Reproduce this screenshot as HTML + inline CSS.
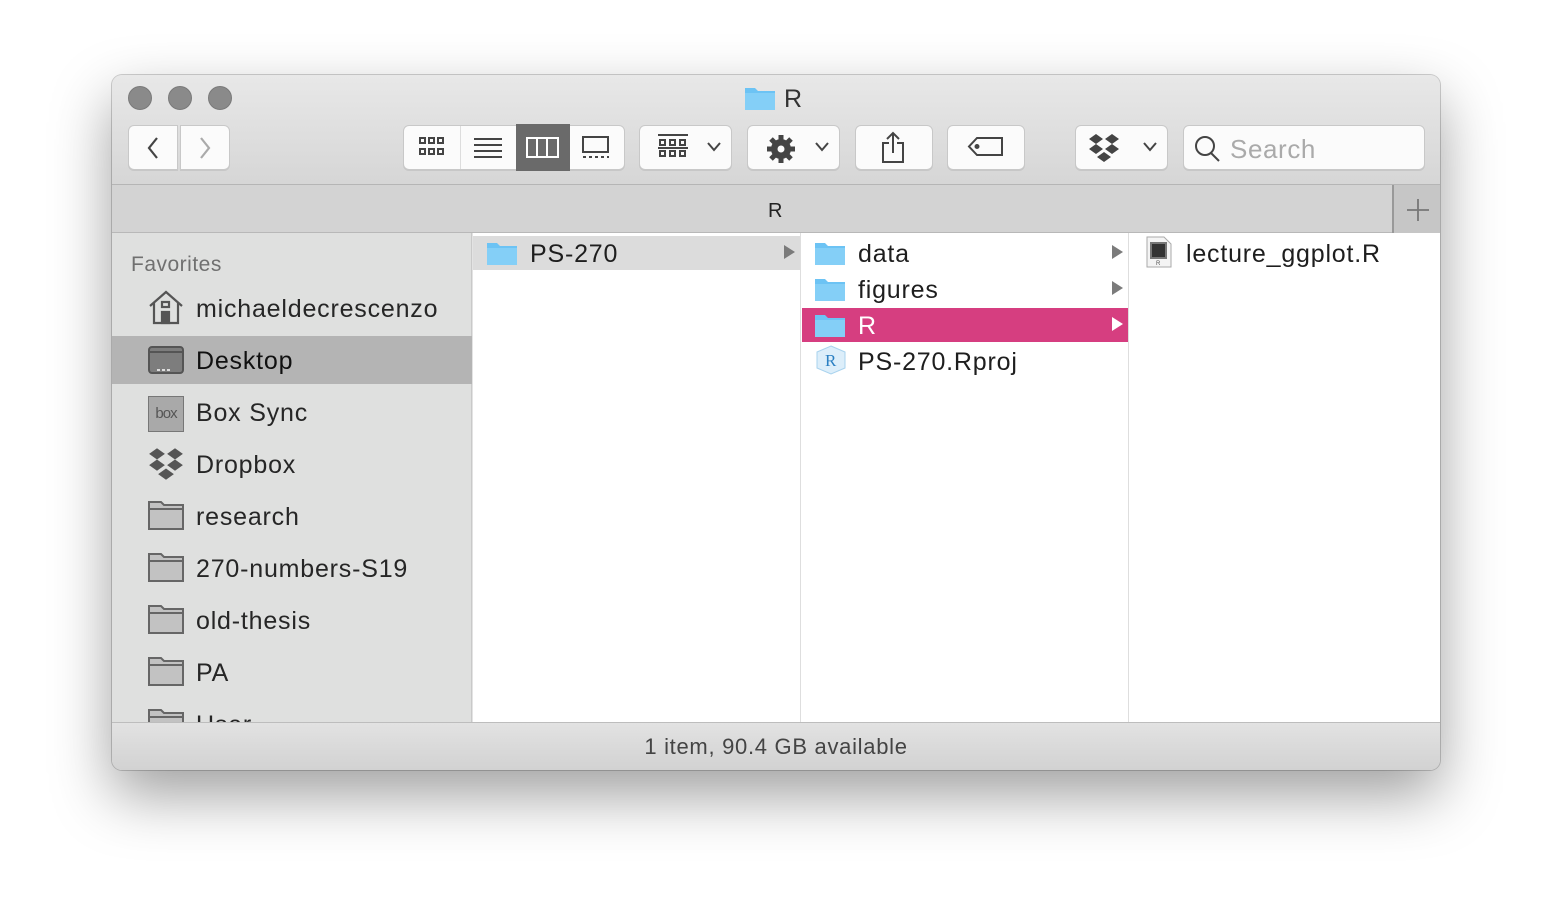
<!DOCTYPE html>
<html><head><meta charset="utf-8"><style>
*{box-sizing:border-box;margin:0;padding:0}
body{width:1552px;height:918px;background:#fff;position:relative;overflow:hidden;font-family:"Liberation Sans",sans-serif}
.a{position:absolute}
.win{left:112px;top:75px;width:1328px;height:695px;border-radius:10px;background:#e3e3e3;box-shadow:0 25px 60px rgba(0,0,0,.38),0 0 0 1px rgba(0,0,0,.18);overflow:hidden}
.light{width:24px;height:24px;border-radius:50%;background:#8a8a8a;border:1px solid #7a7a7a;top:11px}
.btn{background:#fbfbfb;border:1px solid #c8c8c8;border-radius:6px;box-shadow:0 1px 0 rgba(0,0,0,.08);height:45px;top:50px}
.sb{font-size:25px;letter-spacing:0.8px;color:#262626}
.it{font-size:25px;letter-spacing:0.8px;color:#1e1e1e}
.tri{width:0;height:0;border-top:7px solid transparent;border-bottom:7px solid transparent;border-left:11px solid #7b7b7b}
</style></head><body>
<div class="a win">
  <div class="a" style="left:0;top:0;width:1328px;height:110px;background:linear-gradient(#e8e8e8,#d6d6d6);border-bottom:1px solid #b5b5b5"></div>
  <div class="a light" style="left:16px"></div>
  <div class="a light" style="left:56px"></div>
  <div class="a light" style="left:96px"></div>
  <svg class="a" style="left:632px;top:10px" width="32" height="26" viewBox="0 0 32 26"><path d="M1 3h10l3 3h17v19H1z" fill="#6cc3f4"/><path d="M1 8h30v17H1z" fill="#84cff7"/></svg>
  <div class="a" style="left:672px;top:10px;font-size:25px;color:#333">R</div>
  <div class="a btn" style="left:16px;width:50px;border-radius:6px 0 0 6px"></div>
  <div class="a btn" style="left:68px;width:50px;border-radius:0 6px 6px 0"></div>
  <svg class="a" style="left:34px;top:61px" width="14" height="24"><path d="M11 2L3 12l8 10" stroke="#444" stroke-width="2.2" fill="none"/></svg>
  <svg class="a" style="left:86px;top:61px" width="14" height="24"><path d="M3 2l8 10-8 10" stroke="#aaa" stroke-width="2.2" fill="none"/></svg>
  <div class="a btn" style="left:291px;width:222px"></div>
  <div class="a" style="left:348px;top:51px;width:1px;height:43px;background:#ddd"></div>
  <div class="a" style="left:404px;top:49px;width:54px;height:47px;background:#6a6a6a"></div>
  <svg class="a" style="left:306px;top:60px" width="30" height="24" fill="none" stroke="#444" stroke-width="2"><rect x="2" y="3" width="5" height="5"/><rect x="11" y="3" width="5" height="5"/><rect x="20" y="3" width="5" height="5"/><rect x="2" y="14" width="5" height="5"/><rect x="11" y="14" width="5" height="5"/><rect x="20" y="14" width="5" height="5"/></svg>
  <svg class="a" style="left:361px;top:60px" width="30" height="24" stroke="#444" stroke-width="2"><path d="M1 4h28M1 10h28M1 16h28M1 22h28"/></svg>
  <svg class="a" style="left:414px;top:61px" width="34" height="24" fill="none" stroke="#fff" stroke-width="2"><rect x="1" y="2" width="31" height="19"/><path d="M11 2v19M21 2v19"/></svg>
  <svg class="a" style="left:469px;top:60px" width="30" height="26" fill="none" stroke="#444" stroke-width="2"><rect x="2" y="2" width="25" height="15"/><path d="M2 22h3M8 22h3M14 22h3M20 22h3M26 22h2"/></svg>
  <div class="a btn" style="left:527px;width:93px"></div>
  <svg class="a" style="left:545px;top:58px" width="32" height="28" fill="none" stroke="#444" stroke-width="2"><path d="M1 2h30" /><rect x="3" y="7" width="5" height="5"/><rect x="13" y="7" width="5" height="5"/><rect x="23" y="7" width="5" height="5"/><rect x="3" y="18" width="5" height="5"/><rect x="13" y="18" width="5" height="5"/><rect x="23" y="18" width="5" height="5"/><path d="M1 15h30"/></svg>
  <svg class="a" style="left:594px;top:66px" width="16" height="12"><path d="M2 2l6 7 6-7" stroke="#444" stroke-width="2" fill="none"/></svg>
  <div class="a btn" style="left:635px;width:93px"></div>
  <svg class="a" style="left:654px;top:59px" width="30" height="30" viewBox="0 0 30 30"><g fill="#444"><circle cx="15" cy="15" r="10"/><g stroke="#444" stroke-width="5"><path d="M15 1v28M1 15h28M5 5l20 20M25 5L5 25"/></g></g><circle cx="15" cy="15" r="3.5" fill="#fbfbfb"/></svg>
  <svg class="a" style="left:702px;top:66px" width="16" height="12"><path d="M2 2l6 7 6-7" stroke="#444" stroke-width="2" fill="none"/></svg>
  <div class="a btn" style="left:743px;width:78px"></div>
  <svg class="a" style="left:768px;top:56px" width="28" height="34" fill="none" stroke="#444" stroke-width="2"><path d="M9 12H3v19h20V12h-6M13 22V2M7 8l6-6 6 6"/></svg>
  <div class="a btn" style="left:835px;width:78px"></div>
  <svg class="a" style="left:855px;top:61px" width="38" height="22" fill="none" stroke="#444" stroke-width="2"><path d="M10 2h25v17H10L2 10.5z"/><circle cx="10" cy="10.5" r="1.5" fill="#444"/></svg>
  <div class="a btn" style="left:963px;width:93px"></div>
  <svg class="a" style="left:976px;top:58px" width="32" height="30" viewBox="0 0 32 30" fill="#444"><path d="M8 1l7 5-7 5-7-5zM24 1l7 5-7 5-7-5zM8 11l7 5-7 5-7-5zM24 11l7 5-7 5-7-5zM16 19l7 5-7 5-7-5z"/></svg>
  <svg class="a" style="left:1030px;top:66px" width="16" height="12"><path d="M2 2l6 7 6-7" stroke="#444" stroke-width="2" fill="none"/></svg>
  <div class="a btn" style="left:1071px;width:242px"></div>
  <svg class="a" style="left:1082px;top:60px" width="28" height="28" fill="none" stroke="#444" stroke-width="2"><circle cx="11" cy="11" r="9"/><path d="M17 18l8 8"/></svg>
  <div class="a" style="left:1118px;top:59px;font-size:26px;letter-spacing:0.6px;color:#aaa">Search</div>
  <div class="a" style="left:0;top:110px;width:1328px;height:48px;background:#d3d3d3;border-bottom:1px solid #b8b8b8"></div>
  <div class="a" style="left:656px;top:125px;font-size:20px;color:#222">R</div>
  <div class="a" style="left:1280px;top:110px;width:48px;height:48px;background:#c6c6c6;border-left:2px solid #999"></div>
  <svg class="a" style="left:1294px;top:123px" width="24" height="24" stroke="#777" stroke-width="1.8"><path d="M12 1v22M1 12h22"/></svg>
  <div class="a" style="left:0;top:158px;width:360px;height:489px;background:#dfe0df;border-right:1px solid #c9c9c9"></div>
  <div class="a" style="left:19px;top:178px;font-size:21px;letter-spacing:0.5px;color:#707070">Favorites</div>
  <div class="a" style="left:0;top:261px;width:360px;height:48px;background:#b4b4b4"></div>
  <svg class="a" style="left:36px;top:214px" width="36" height="36" fill="none" stroke="#555" stroke-width="2.2"><path d="M2 17L18 3l16 14M6 14v20h24V14"/><rect x="14" y="23" width="7" height="11" fill="#555"/><rect x="14" y="13" width="7" height="5"/></svg>
  <div class="a sb" style="left:84px;top:220px">michaeldecrescenzo</div>
  <svg class="a" style="left:35px;top:270px" width="38" height="30" fill="none" stroke="#555" stroke-width="2"><rect x="2" y="2" width="34" height="26" rx="3" fill="#7d7d7d"/><path d="M3 7h32" stroke="#555"/><path d="M10 25h3M15 25h3M20 25h3" stroke="#ddd"/></svg>
  <div class="a sb" style="left:84px;top:272px;color:#111">Desktop</div>
  <div class="a" style="left:36px;top:321px;width:36px;height:36px;background:#a9a9a9;border:1px solid #777;font-size:15px;color:#555;text-align:center;line-height:34px;letter-spacing:-1px">box</div>
  <div class="a sb" style="left:84px;top:324px">Box Sync</div>
  <svg class="a" style="left:36px;top:372px" width="36" height="34" viewBox="0 0 32 30" fill="#555"><path d="M8 1l7 5-7 5-7-5zM24 1l7 5-7 5-7-5zM8 11l7 5-7 5-7-5zM24 11l7 5-7 5-7-5zM16 19l7 5-7 5-7-5z"/></svg>
  <div class="a sb" style="left:84px;top:376px">Dropbox</div>
  <div class="a" style="left:35px;top:424px"><svg width="38" height="32" stroke="#666" stroke-width="2"><path d="M2 3h12l3 3h19v24H2z" fill="#c2c2c2"/><path d="M2 10h34" fill="none"/></svg></div>
  <div class="a sb" style="left:84px;top:428px">research</div>
  <div class="a" style="left:35px;top:476px"><svg width="38" height="32" stroke="#666" stroke-width="2"><path d="M2 3h12l3 3h19v24H2z" fill="#c2c2c2"/><path d="M2 10h34" fill="none"/></svg></div>
  <div class="a sb" style="left:84px;top:480px">270-numbers-S19</div>
  <div class="a" style="left:35px;top:528px"><svg width="38" height="32" stroke="#666" stroke-width="2"><path d="M2 3h12l3 3h19v24H2z" fill="#c2c2c2"/><path d="M2 10h34" fill="none"/></svg></div>
  <div class="a sb" style="left:84px;top:532px">old-thesis</div>
  <div class="a" style="left:35px;top:580px"><svg width="38" height="32" stroke="#666" stroke-width="2"><path d="M2 3h12l3 3h19v24H2z" fill="#c2c2c2"/><path d="M2 10h34" fill="none"/></svg></div>
  <div class="a sb" style="left:84px;top:584px">PA</div>
  <div class="a" style="left:0;top:630px;width:360px;height:17px;overflow:hidden">
    <div class="a" style="left:35px;top:2px"><svg width="38" height="32" stroke="#666" stroke-width="2"><path d="M2 3h12l3 3h19v24H2z" fill="#c2c2c2"/><path d="M2 10h34" fill="none"/></svg></div>
    <div class="a sb" style="left:84px;top:6px">User</div>
  </div>
  <div class="a" style="left:361px;top:158px;width:967px;height:489px;background:#fff"></div>
  <div class="a" style="left:688px;top:158px;width:1px;height:489px;background:#dedede"></div>
  <div class="a" style="left:1016px;top:158px;width:1px;height:489px;background:#dedede"></div>
  <div class="a" style="left:361px;top:161px;width:327px;height:34px;background:#dcdcdc"></div>
  <svg class="a" style="left:374px;top:165px" width="32" height="26"><path d="M1 3h10l3 3h17v19H1z" fill="#6cc3f4"/><path d="M1 8h30v17H1z" fill="#84cff7"/></svg>
  <div class="a it" style="left:418px;top:165px">PS-270</div>
  <div class="a tri" style="left:672px;top:170px"></div>
  <svg class="a" style="left:702px;top:165px" width="32" height="26"><path d="M1 3h10l3 3h17v19H1z" fill="#6cc3f4"/><path d="M1 8h30v17H1z" fill="#84cff7"/></svg>
  <div class="a it" style="left:746px;top:165px">data</div>
  <div class="a tri" style="left:1000px;top:170px"></div>
  <svg class="a" style="left:702px;top:201px" width="32" height="26"><path d="M1 3h10l3 3h17v19H1z" fill="#6cc3f4"/><path d="M1 8h30v17H1z" fill="#84cff7"/></svg>
  <div class="a it" style="left:746px;top:201px">figures</div>
  <div class="a tri" style="left:1000px;top:206px"></div>
  <div class="a" style="left:690px;top:233px;width:326px;height:34px;background:#d63e80"></div>
  <svg class="a" style="left:702px;top:237px" width="32" height="26"><path d="M1 3h10l3 3h17v19H1z" fill="#6cc3f4"/><path d="M1 8h30v17H1z" fill="#84cff7"/></svg>
  <div class="a it" style="left:746px;top:237px;color:#fff">R</div>
  <div class="a tri" style="left:1000px;top:242px;border-left-color:#fff"></div>
  <svg class="a" style="left:703px;top:270px" width="32" height="30"><path d="M16 1l14 6v16l-14 6-14-6V7z" fill="#dceefa" stroke="#a9d3ee"/><text x="10" y="21" font-family="Liberation Serif" font-size="17" fill="#2a7fc2">R</text></svg>
  <div class="a it" style="left:746px;top:273px">PS-270.Rproj</div>
  <svg class="a" style="left:1033px;top:161px" width="28" height="32"><path d="M2 1h17l7 7v23H2z" fill="#f4f4f4" stroke="#aaa"/><rect x="6" y="7" width="15" height="15" fill="#333" stroke="#777" stroke-width="2"/><text x="11" y="29" font-size="6" fill="#555">R</text></svg>
  <div class="a it" style="left:1074px;top:165px">lecture_ggplot.R</div>
  <div class="a" style="left:0;top:647px;width:1328px;height:48px;background:linear-gradient(#e2e2e2,#d2d2d2);border-top:1px solid #bdbdbd"></div>
  <div class="a" style="left:0;top:659px;width:1328px;text-align:center;font-size:22px;letter-spacing:0.7px;color:#444">1 item, 90.4 GB available</div>
</div>
</body></html>
